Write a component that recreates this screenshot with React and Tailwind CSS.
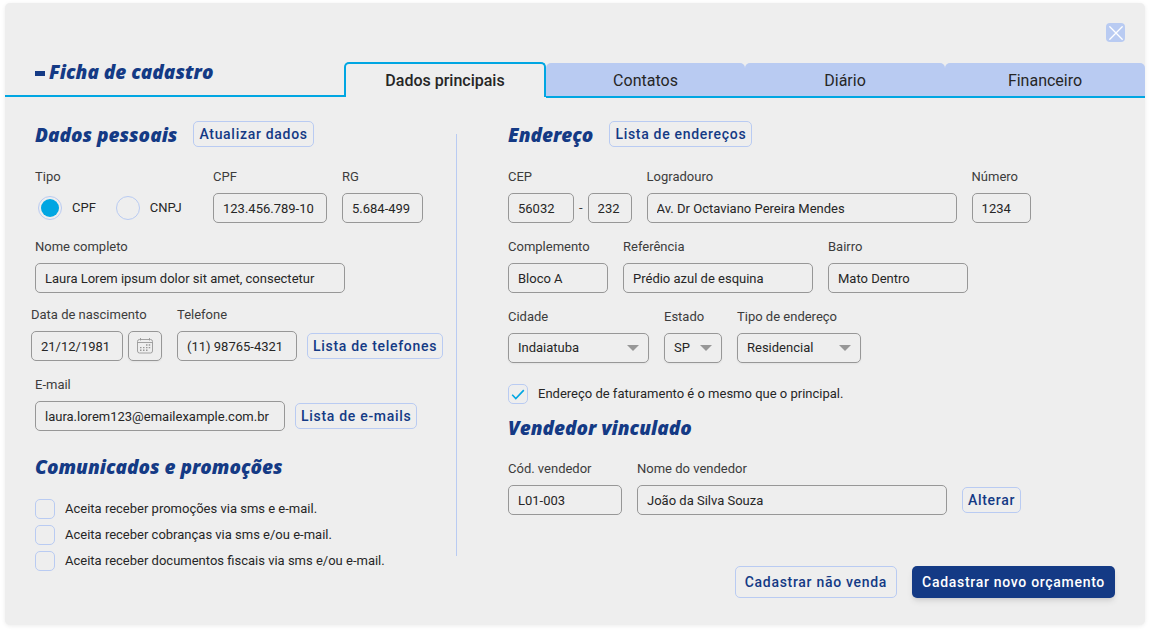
import { useId } from "react";

const outline =
  "shrink-0 whitespace-nowrap rounded-[5px] border border-[#b9cbf2] text-sm font-medium tracking-wider text-[#143a85]";

function Heading({ children }) {
  return (
    <h2 className="font-['Open_Sans',sans-serif] text-[19px] leading-7 font-extrabold italic text-[#143a85]">
      {children}
    </h2>
  );
}

function SmallButton({ children }) {
  return (
    <button type="button" className={`${outline} my-0.5 h-[26px] px-[5px]`}>
      {children}
    </button>
  );
}

function Field({ label, value, width, className = "" }) {
  const id = useId();
  return (
    <div className={`flex flex-col gap-1.5 ${width} ${className}`}>
      <label htmlFor={id} className="whitespace-nowrap leading-5">
        {label}
      </label>
      <input
        id={id}
        type="text"
        defaultValue={value}
        className="h-[30px] w-full rounded-[5px] border border-[#979797] pr-1 pl-[9px] text-[#262626] outline-none"
      />
    </div>
  );
}

function SelectField({ label, options, width }) {
  const id = useId();
  return (
    <div className={`flex flex-col gap-1.5 ${width}`}>
      <label htmlFor={id} className="whitespace-nowrap leading-5">
        {label}
      </label>
      <div className="relative">
        <select
          id={id}
          className="h-[30px] w-full appearance-none rounded-[5px] border border-[#979797] px-[9px] text-[#262626] shadow-xs outline-none"
        >
          {options.map((option) => (
            <option key={option}>{option}</option>
          ))}
        </select>
        <svg
          viewBox="0 0 12 6"
          className="pointer-events-none absolute top-3 right-2.5 h-1.5 w-3 fill-[#979797]"
          aria-hidden="true"
        >
          <path d="M0 0h12L6 6z" />
        </svg>
      </div>
    </div>
  );
}

function Checkbox({ children, defaultChecked }) {
  return (
    <label className="flex items-center gap-2.5 leading-5">
      <span className="grid size-5 shrink-0">
        <input
          type="checkbox"
          defaultChecked={defaultChecked}
          className="peer col-start-1 row-start-1 size-5 appearance-none rounded-[5px] border border-[#b9cbf2]"
        />
        <svg
          viewBox="0 0 20 20"
          className="pointer-events-none invisible col-start-1 row-start-1 size-5 fill-none stroke-[#00a6e2] stroke-[1.6] peer-checked:visible"
          aria-hidden="true"
        >
          <path d="M4.2 10.8l3.6 3.7 8-8.4" />
        </svg>
      </span>
      {children}
    </label>
  );
}

function Radio({ children, defaultChecked }) {
  return (
    <label className="flex items-center gap-2.5">
      <input
        type="radio"
        name="tipo"
        defaultChecked={defaultChecked}
        className="size-6 appearance-none rounded-full border border-[#b9cbf2] bg-clip-content p-0.5 checked:bg-[#00a6e2]"
      />
      {children}
    </label>
  );
}

function Calendar() {
  return (
    <svg viewBox="0 0 16 16" className="size-4 fill-none stroke-[#979797]" aria-hidden="true">
      <rect x="0.5" y="1.5" width="15" height="13.5" rx="2" strokeWidth="0.9" />
      <path d="M.5 4.5h15M3.5 0v2.5M12.5 0v2.5" strokeWidth="0.9" />
      <path
        d="M9 7h1.5M11.7 7h1.5M3 9.6h1.5M6 9.6h1.5M9 9.6h1.5M11.7 9.6h1.5M3 12.3h1.5M6 12.3h1.5M9 12.3h1.5"
        strokeWidth="1.4"
      />
    </svg>
  );
}

const tabs = ["Contatos", "Diário", "Financeiro"];

export default function App() {
  return (
    <div className="bg-white px-[5px] pt-[3px] pb-[5px] font-[Roboto,sans-serif] text-[13px] text-[#3c3c3c]">
      <main className="rounded-[5px] bg-[#eeeeee] pb-[27px] shadow-[0_1px_4px_rgba(0,0,0,0.08)]">
        <header>
          <div className="flex justify-end px-5 py-5">
            <button
              type="button"
              aria-label="Fechar"
              className="flex size-[19px] items-center justify-center rounded-[4px] bg-[#b9cbf2]"
            >
              <svg viewBox="0 0 14 14" className="size-3.5 stroke-white stroke-[1.3]" aria-hidden="true">
                <path d="M.8.8l12.4 12.4M13.2.8L.8 13.2" strokeLinecap="round" />
              </svg>
            </button>
          </div>
          <div className="grid h-9 grid-cols-[339fr_202fr_199fr_200fr_200fr]">
            <h1 className="flex h-[35px] items-center gap-1 border-b-2 border-[#00a6e2] pb-3.5 pl-[30px] font-['Open_Sans',sans-serif] text-[19px] leading-5 font-extrabold italic whitespace-nowrap text-[#143a85]">
              <span className="mt-1 h-[5px] w-2.5 bg-[#143a85]" />
              Ficha de cadastro
            </h1>
            <button
              type="button"
              className="h-[35px] rounded-t-[5px] border-2 border-b-0 border-[#00a6e2] text-base font-medium text-[#262626]"
            >
              Dados principais
            </button>
            {tabs.map((tab) => (
              <button
                key={tab}
                type="button"
                className="mt-px h-[35px] border-b-2 border-[#00a6e2] text-base text-[#262626]"
              >
                <span className="flex h-full items-center justify-center rounded-t-[5px] bg-[#b9cbf2] pt-0.5">
                  {tab}
                </span>
              </button>
            ))}
          </div>
        </header>

        <div className="flex px-[30px] pt-[23px]">
          <section className="flex w-[421px] shrink-0 flex-col">
            <div className="-my-0.5 flex items-end gap-4">
              <Heading>Dados pessoais</Heading>
              <SmallButton>Atualizar dados</SmallButton>
            </div>
            <div className="mt-5 flex">
              <fieldset className="w-[178px]">
                <legend className="leading-5">Tipo</legend>
                <div className="mt-1.5 flex h-[30px] items-center gap-5 pl-[3px] text-[#262626]">
                  <Radio defaultChecked>CPF</Radio>
                  <Radio>CNPJ</Radio>
                </div>
              </fieldset>
              <div className="flex gap-[15px]">
                <Field label="CPF" value="123.456.789-10" width="w-[114px]" />
                <Field label="RG" value="5.684-499" width="w-[81px]" />
              </div>
            </div>
            <div className="mt-3.5">
              <Field label="Nome completo" value="Laura Lorem ipsum dolor sit amet, consectetur" width="w-[310px]" />
            </div>
            <div className="mt-3 -ml-1 flex items-end">
              <Field label="Data de nascimento" value="21/12/1981" width="w-[92px]" />
              <button
                type="button"
                aria-label="Abrir calendário"
                className="ml-[5px] flex h-[30px] w-[34px] items-center justify-center rounded-[5px] border border-[#979797] shadow-xs"
              >
                <Calendar />
              </button>
              <Field label="Telefone" value="(11) 98765-4321" width="w-[120px]" className="mr-2.5 ml-[15px]" />
              <SmallButton>Lista de telefones</SmallButton>
            </div>
            <div className="mt-3.5 flex items-end gap-2.5">
              <Field label="E-mail" value="laura.lorem123@emailexample.com.br" width="w-[250px]" />
              <SmallButton>Lista de e-mails</SmallButton>
            </div>
            <div className="mt-[22px] mb-[18px]">
              <Heading>Comunicados e promoções</Heading>
            </div>
            <div className="flex flex-col gap-1.5 text-[#262626]">
              <Checkbox>Aceita receber promoções via sms e e-mail.</Checkbox>
              <Checkbox>Aceita receber cobranças via sms e/ou e-mail.</Checkbox>
              <Checkbox>Aceita receber documentos fiscais via sms e/ou e-mail.</Checkbox>
            </div>
          </section>

          <div className="mt-[13px] mr-[51px] mb-[42px] w-px shrink-0 bg-[#b9cbf2]" />

          <section className="flex min-w-0 flex-1 flex-col">
            <div className="-my-0.5 flex items-end gap-4">
              <Heading>Endereço</Heading>
              <SmallButton>Lista de endereços</SmallButton>
            </div>
            <div className="mt-5 flex gap-[15px]">
              <fieldset>
                <legend className="leading-5">CEP</legend>
                <div className="mt-1.5 flex items-center gap-[5px]">
                  <input
                    aria-label="CEP"
                    defaultValue="56032"
                    className="h-[30px] w-[66px] rounded-[5px] border border-[#979797] px-[9px] text-[#262626] outline-none"
                  />
                  <span>-</span>
                  <input
                    aria-label="CEP, complemento"
                    defaultValue="232"
                    className="h-[30px] w-11 rounded-[5px] border border-[#979797] px-[9px] text-[#262626] outline-none"
                  />
                </div>
              </fieldset>
              <Field label="Logradouro" value="Av. Dr Octaviano Pereira Mendes" width="w-[310px]" />
              <Field label="Número" value="1234" width="w-[59px]" />
            </div>
            <div className="mt-3.5 flex gap-[15px]">
              <Field label="Complemento" value="Bloco A" width="w-[100px]" />
              <Field label="Referência" value="Prédio azul de esquina" width="w-[190px]" />
              <Field label="Bairro" value="Mato Dentro" width="w-[140px]" />
            </div>
            <div className="mt-3.5 flex gap-[15px]">
              <SelectField label="Cidade" options={["Indaiatuba", "Campinas"]} width="w-[141px]" />
              <SelectField label="Estado" options={["SP", "RJ"]} width="w-[58px]" />
              <SelectField label="Tipo de endereço" options={["Residencial", "Comercial"]} width="w-[124px]" />
            </div>
            <div className="mt-[21px] mb-2.5 text-[#262626]">
              <Checkbox defaultChecked>Endereço de faturamento é o mesmo que o principal.</Checkbox>
            </div>
            <Heading>Vendedor vinculado</Heading>
            <div className="mt-[17px] flex items-end gap-[15px]">
              <Field label="Cód. vendedor" value="L01-003" width="w-[114px]" />
              <Field label="Nome do vendedor" value="João da Silva Souza" width="w-[310px]" />
              <SmallButton>Alterar</SmallButton>
            </div>
            <div className="mt-[51px] flex justify-end gap-[15px]">
              <button type="button" className={`${outline} h-8 px-[9px]`}>
                Cadastrar não venda
              </button>
              <button
                type="button"
                className="h-8 shrink-0 rounded-[5px] bg-[#143a85] px-2.5 text-sm font-medium tracking-wider whitespace-nowrap text-white shadow-md"
              >
                Cadastrar novo orçamento
              </button>
            </div>
          </section>
        </div>
      </main>
    </div>
  );
}
